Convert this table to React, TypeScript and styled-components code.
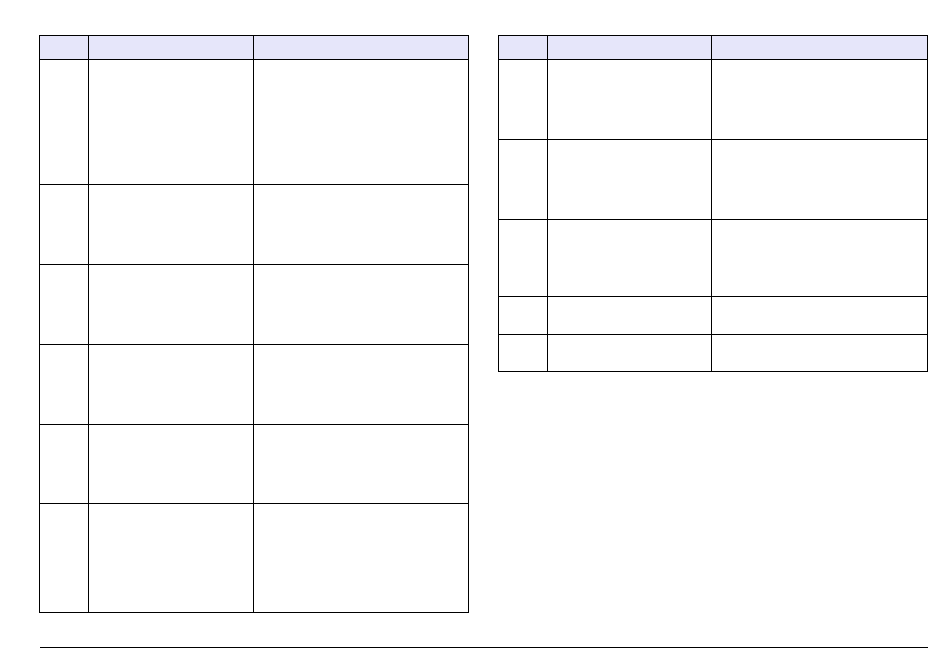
import React from "react";
import styled, { createGlobalStyle } from "styled-components";

const GlobalStyle = createGlobalStyle`
  html, body {
    margin: 0;
    padding: 0;
    background: #ffffff;
    font-family: "Liberation Sans", Arial, sans-serif;
  }
  * { box-sizing: border-box; }
`;

const Page = styled.div`
  width: 950px;
  height: 657px;
  padding: 35px 0 0 39px;
  display: flex;
  flex-direction: column;
`;

const Tables = styled.div`
  display: flex;
  align-items: flex-start;
  gap: 29px;
`;

const Table = styled.div`
  width: 430px;
  border-left: 1px solid #000;
  border-top: 1px solid #000;
  display: flex;
  flex-direction: column;
`;

const Row = styled.div<{ $h: number; $cols: string; $head?: boolean }>`
  display: grid;
  grid-template-columns: ${(p) => p.$cols};
  height: ${(p) => p.$h}px;
  background: ${(p) => (p.$head ? "#e6e6fa" : "#ffffff")};
`;

const Cell = styled.div`
  border-right: 1px solid #000;
  border-bottom: 1px solid #000;
  font-size: 12px;
  color: #000;
`;

const Rule = styled.div`
  margin-top: 34px;
  margin-left: 1px;
  width: 888px;
  height: 1px;
  background: #000;
`;

const leftRows = [125, 80, 80, 80, 79, 109];
const rightRows = [80, 80, 77, 38, 37];

function DataTable({ rows, cols }: { rows: number[]; cols: string }) {
  return (
    <Table>
      <Row $h={24} $cols={cols} $head>
        <Cell />
        <Cell />
        <Cell />
      </Row>
      {rows.map((h, i) => (
        <Row key={i} $h={h} $cols={cols}>
          <Cell />
          <Cell />
          <Cell />
        </Row>
      ))}
    </Table>
  );
}

export default function App() {
  return (
    <>
      <GlobalStyle />
      <Page>
        <Tables>
          <DataTable rows={leftRows} cols="49px 165px 215px" />
          <DataTable rows={rightRows} cols="49px 164px 216px" />
        </Tables>
        <Rule />
      </Page>
    </>
  );
}
